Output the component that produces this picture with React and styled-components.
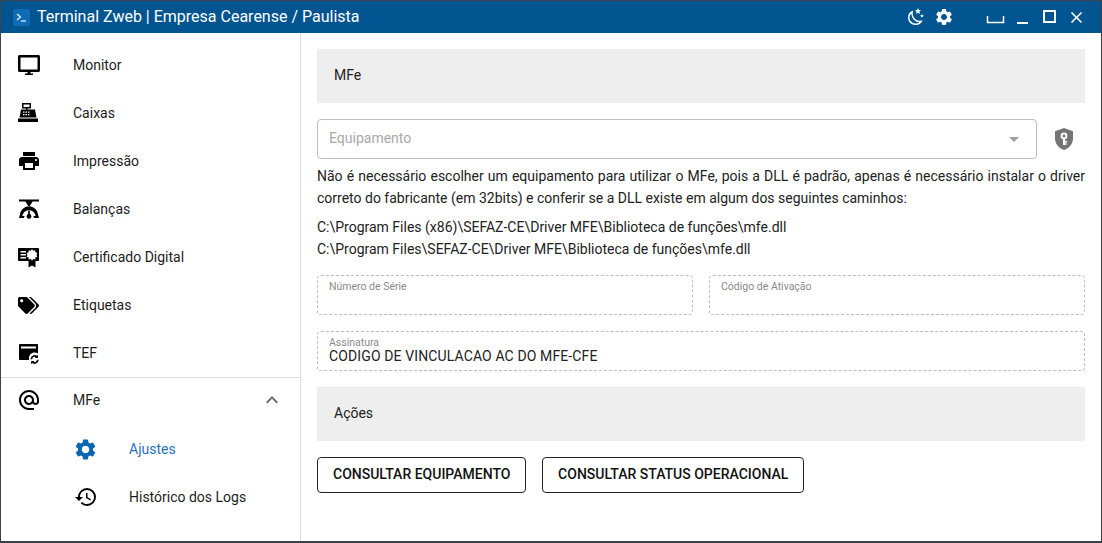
import React from "react";
import styled, { createGlobalStyle } from "styled-components";
import { FaTags } from "react-icons/fa";
import {
  MdPrint,
  MdAlternateEmail,
  MdSettings,
  MdHistory,
  MdExpandLess,
  MdClose,
  MdArrowDropDown,
} from "react-icons/md";

const GlobalStyle = createGlobalStyle`
  html, body {
    margin: 0;
    padding: 0;
    background: #fff;
  }
  * {
    box-sizing: border-box;
  }
`;

const Window = styled.div`
  width: 1102px;
  height: 543px;
  display: flex;
  flex-direction: column;
  border: 1px solid #3c4348;
  border-bottom-width: 2px;
  font-family: Roboto, "Liberation Sans", sans-serif;
  color: #1a1a1a;
  overflow: hidden;
`;

const TitleBar = styled.header`
  height: 32px;
  flex: none;
  display: flex;
  align-items: center;
  background: #005490;
  color: #fff;
  padding: 0 11px 0 12px;
`;

const AppLogo = styled.div`
  width: 17px;
  height: 17px;
  border-radius: 3px;
  background: #0d6cb5;
  display: flex;
  margin-right: 7px;
`;

const AppTitle = styled.div`
  font-size: 16px;
  line-height: 32px;
  flex: 1;
`;

const TitleActions = styled.div`
  display: flex;
  align-items: center;
`;

const TitleIcon = styled.div`
  width: ${(p) => p.$w || 28}px;
  height: 32px;
  margin-left: ${(p) => p.$ml || 0}px;
  display: flex;
  align-items: center;
  justify-content: center;
`;

const Body = styled.div`
  flex: 1;
  display: flex;
  min-height: 0;
`;

const Sidebar = styled.nav`
  width: 300px;
  flex: none;
  padding-top: 8px;
  border-right: 1px solid #dcdcdc;
`;

const MenuItem = styled.div`
  height: 48px;
  display: flex;
  align-items: center;
  padding-left: ${(p) => (p.$sub ? 72 : 16)}px;
  padding-bottom: ${(p) => (p.$divider ? 3 : 0)}px;
  font-size: 14px;
  color: ${(p) => (p.$active ? "#2a73b8" : "#1d1d1d")};
  border-top: ${(p) => (p.$divider ? "1px solid #dcdcdc" : "none")};
`;

const MenuIcon = styled.span`
  width: 56px;
  flex: none;
  display: flex;
  align-items: center;
  padding-left: ${(p) => p.$nudge || 0}px;
  color: ${(p) => (p.$active ? "#0a66b0" : "#000")};
`;

const MenuLabel = styled.span`
  flex: 1;
`;

const Chevron = styled.span`
  display: flex;
  margin-right: 16px;
  color: #6b6b6b;
`;

const Content = styled.main`
  flex: 1;
  min-width: 0;
  padding: 16px 16px 0;
  display: flex;
  flex-direction: column;
`;

const SectionBar = styled.div`
  height: 54px;
  flex: none;
  margin-top: ${(p) => p.$mt || 0}px;
  background: #eeeeee;
  display: flex;
  align-items: center;
  padding: 0 0 2px 17px;
  font-size: 14px;
  color: #222;
`;

const SelectRow = styled.div`
  display: flex;
  align-items: center;
  margin-top: 16px;
  height: 40px;
`;

const SelectBox = styled.div`
  width: 720px;
  height: 40px;
  border: 1px solid #bdbdbd;
  border-radius: 4px;
  display: flex;
  align-items: center;
  justify-content: space-between;
  padding: 0 10px 0 11px;
  font-size: 14px;
  color: #a8a8a8;
`;

const Placeholder = styled.span`
  padding-bottom: 2px;
`;

const ShieldButton = styled.div`
  width: 48px;
  display: flex;
  justify-content: center;
  padding-left: 6px;
`;

const HelpText = styled.p`
  margin: 6px 0 0;
  font-size: 14px;
  line-height: 22px;
  text-align: justify;
  color: #222;
`;

const PathList = styled.div`
  margin-top: 7px;
  font-size: 14px;
  line-height: 22px;
  color: #222;
`;

const FieldRow = styled.div`
  display: flex;
  gap: 16px;
  margin-top: ${(p) => p.$mt || 16}px;
`;

const Field = styled.div`
  flex: 1;
  height: 40px;
  border: 1px dashed #bdbdbd;
  border-radius: 4px;
  padding: 5px 11px 0;
`;

const FieldLabel = styled.div`
  font-size: 10.5px;
  line-height: 12px;
  color: #8a8a8a;
`;

const FieldValue = styled.div`
  font-size: 14px;
  line-height: 14px;
  letter-spacing: 0.12px;
  color: #222;
`;

const ActionsRow = styled.div`
  display: flex;
  gap: 16px;
  margin-top: 16px;
`;

const OutlineButton = styled.button`
  height: 36px;
  padding: 0 14.7px 2px 15px;
  background: #fff;
  border: 1px solid #222;
  border-radius: 4px;
  font-family: inherit;
  font-size: 14px;
  font-weight: 500;
  color: #111;
`;

const MonitorIcon = () => (
  <svg width="24" height="22" viewBox="0 0 24 22" fill="#000">
    <path
      fillRule="evenodd"
      d="M2.500 1h19c.8 0 1.500.7 1.500 1.500v14c0 .8-.7 1.500-1.500 1.500h-19c-.8 0-1.500-.7-1.500-1.500v-14C1 1.700 1.700 1 2.500 1zM3.500 3.500v12h17v-12z"
    />
    <path d="M10.500 18h3v1.500h2.500V21H8v-1.500h2.500z" />
  </svg>
);

const RegisterIcon = () => (
  <svg width="22" height="22" viewBox="0 0 22 22" fill="#000">
    <path fillRule="evenodd" d="M5 1h9v5.500H5zM6.500 2.500V5h6V2.500z" />
    <path d="M9 6h1.500v2H9z" />
    <path
      fillRule="evenodd"
      d="M4 7.500h14l1.500 8h-17zM6 9.500v1.300h1.500V9.500zm2.500 0v1.300H10V9.500zm2.500 0v1.300h1.500V9.500zM6 12v1.300h1.500V12zm2.500 0v1.300H10V12zm2.500 0v1.300h1.500V12z"
    />
    <path d="M1 16.500h20V20H1z" />
  </svg>
);

const BalanceIcon = () => (
  <svg width="22" height="22" viewBox="0 0 22 22" fill="#000">
    <path d="M1 1.500h20v2h-6.400L11.800 8h-1.600L7.400 3.500H1z" />
    <path d="M11 8.300c4.700 0 8.500 3.600 9 8.200l1 3.500h-4.800l-.9-2h2.300c-.5-3.300-3.200-5.700-6.600-5.700S4.900 14.700 4.400 18h2.300l-.9 2H1l1-3.500c.5-4.600 4.300-8.200 9-8.200z" />
    <circle cx="11" cy="18.400" r="2.400" />
    <path d="M10.300 12.500h1.400l.3 5h-2z" />
  </svg>
);

const CertificateIcon = () => (
  <svg width="22" height="22" viewBox="0 0 22 22">
    <path fill="#000" d="M1 2h19c.6 0 1 .4 1 1v11c0 .6-.4 1-1 1H1c-.6 0-1-.4-1-1V3c0-.6.4-1 1-1z" />
    <path fill="#fff" d="M2.500 5H8v1.500H2.500zM2.500 8H8v1.500H2.500zM2.500 11H8v1.500H2.500z" />
    <path fill="#000" d="M10.500 12h7v9.500l-3.500-2-3.500 2z" />
    <path
      fill="#fff"
      d="M14 3l1.200 1.700 2-.5.300 2 1.900.8-.9 1.900.9 1.900-1.900.8-.3 2-2-.5L14 14.800l-1.200-1.700-2 .5-.3-2-1.900-.8.9-1.900-.9-1.900 1.900-.8.300-2 2 .5z"
    />
  </svg>
);

const CardSyncIcon = () => (
  <svg width="22" height="22" viewBox="0 0 22 22">
    <path
      fill="#000"
      d="M2 2h17c.6 0 1 .4 1 1v8.500c-1-.6-2.200-.9-3.500-.9-2.900 0-5.300 2.300-5.500 5.400v2H2c-.6 0-1-.4-1-1V3c0-.6.4-1 1-1zm1 2.500V6.500h15V4.500z"
      fillRule="evenodd"
    />
    <path
      d="M13.400 17.200a3.200 3.200 0 0 1 5.400-2.300M19.800 17.800a3.200 3.200 0 0 1-5.400 2.300"
      fill="none"
      stroke="#000"
      strokeWidth="1.700"
    />
    <path d="M20 12.800v3.300h-3.300zM13.200 22.200v-3.300h3.300z" fill="#000" />
  </svg>
);

const MoonStarsIcon = () => (
  <svg width="18" height="18" viewBox="0 0 18 18" fill="#fff">
    <path
      fillRule="evenodd"
      d="M6.500 2.500A7.500 7.500 0 0 0 1 9.700 7.400 7.400 0 0 0 8.500 17a7.500 7.500 0 0 0 7.200-4.800c-.8.300-1.700.5-2.600.5-4.300 0-7.400-3.300-7.400-7.300 0-1.100.3-2.100.8-2.900zM4.500 5.400c-.1 4.500 3.200 8.300 7.900 8.900-1.100.9-2.400 1.200-3.900 1.200a5.900 5.900 0 0 1-6-5.800c0-1.600.7-3.200 2-4.300z"
    />
    <path d="M11 0l.9 2.100 2.200.2-1.700 1.400.6 2.200-2-1.200-1.900 1.200.5-2.200-1.600-1.400 2.200-.2zM15 6l.5 1.200 1.300.1-1 .9.300 1.300-1.100-.7-1.200.7.300-1.300-1-.9 1.300-.1z" />
  </svg>
);

const ShieldKeyIcon = () => (
  <svg width="20" height="22" viewBox="0 0 20 22">
    <path fill="#757575" d="M10 0l9 3.300v7.200c0 5.100-3.800 9.800-9 11.500-5.200-1.700-9-6.400-9-11.500V3.300z" />
    <circle cx="10" cy="8" r="2.400" fill="none" stroke="#fff" strokeWidth="2" />
    <path d="M9 10h2v7H9zM11 13h2.200v1.500H11zM11 15.300h1.600v1.500H11z" fill="#fff" />
  </svg>
);

const menu = [
  { label: "Monitor", icon: <MonitorIcon /> },
  { label: "Caixas", icon: <RegisterIcon /> },
  { label: "Impressão", icon: <MdPrint size={24} /> },
  { label: "Balanças", icon: <BalanceIcon />, nudge: 1 },
  { label: "Certificado Digital", icon: <CertificateIcon />, nudge: 1 },
  { label: "Etiquetas", icon: <FaTags size={21} />, nudge: 1 },
  { label: "TEF", icon: <CardSyncIcon />, nudge: 1 },
];

export default function App() {
  return (
    <Window>
      <GlobalStyle />
      <TitleBar>
        <AppLogo>
          <svg width="17" height="17" viewBox="0 0 17 17" fill="none" stroke="#fff" strokeWidth="1.100">
            <path d="M4 5l3.500 3L4 11" />
            <path d="M8 12h5" />
          </svg>
        </AppLogo>
        <AppTitle>Terminal Zweb | Empresa Cearense / Paulista</AppTitle>
        <TitleActions>
          <TitleIcon>
            <MoonStarsIcon />
          </TitleIcon>
          <TitleIcon>
            <MdSettings size={20} />
          </TitleIcon>
          <TitleIcon $w={27} $ml={24}>
            <svg width="27" height="32" viewBox="0 0 27 32" fill="none" stroke="#fff" strokeWidth="1.500">
              <path d="M5.500 15v6.500h16V15" />
            </svg>
          </TitleIcon>
          <TitleIcon $w={27}>
            <svg width="27" height="32" viewBox="0 0 27 32" fill="#fff">
              <rect x="8" y="21" width="11" height="2" />
            </svg>
          </TitleIcon>
          <TitleIcon $w={27}>
            <svg width="27" height="32" viewBox="0 0 27 32" fill="none" stroke="#fff" strokeWidth="2">
              <rect x="8" y="10" width="11" height="11" />
            </svg>
          </TitleIcon>
          <TitleIcon $w={27}>
            <MdClose size={19} />
          </TitleIcon>
        </TitleActions>
      </TitleBar>
      <Body>
        <Sidebar>
          {menu.map((item) => (
            <MenuItem key={item.label}>
              <MenuIcon $nudge={item.nudge}>{item.icon}</MenuIcon>
              <MenuLabel>{item.label}</MenuLabel>
            </MenuItem>
          ))}
          <MenuItem $divider>
            <MenuIcon>
              <MdAlternateEmail size={24} />
            </MenuIcon>
            <MenuLabel>MFe</MenuLabel>
            <Chevron>
              <MdExpandLess size={24} />
            </Chevron>
          </MenuItem>
          <MenuItem $sub $active>
            <MenuIcon $active>
              <MdSettings size={25} />
            </MenuIcon>
            <MenuLabel>Ajustes</MenuLabel>
          </MenuItem>
          <MenuItem $sub>
            <MenuIcon $nudge={1}>
              <MdHistory size={24} />
            </MenuIcon>
            <MenuLabel>Histórico dos Logs</MenuLabel>
          </MenuItem>
        </Sidebar>
        <Content>
          <SectionBar>MFe</SectionBar>
          <SelectRow>
            <SelectBox>
              <Placeholder>Equipamento</Placeholder>
              <MdArrowDropDown size={24} color="#9e9e9e" />
            </SelectBox>
            <ShieldButton>
              <ShieldKeyIcon />
            </ShieldButton>
          </SelectRow>
          <HelpText>
            Não é necessário escolher um equipamento para utilizar o MFe, pois a DLL é padrão, apenas é necessário
            instalar o driver correto do fabricante (em 32bits) e conferir se a DLL existe em algum dos seguintes
            caminhos:
          </HelpText>
          <PathList>
            <div>C:\Program Files (x86)\SEFAZ-CE\Driver MFE\Biblioteca de funções\mfe.dll</div>
            <div>C:\Program Files\SEFAZ-CE\Driver MFE\Biblioteca de funções\mfe.dll</div>
          </PathList>
          <FieldRow $mt={15}>
            <Field>
              <FieldLabel>Número de Série</FieldLabel>
            </Field>
            <Field>
              <FieldLabel>Código de Ativação</FieldLabel>
            </Field>
          </FieldRow>
          <FieldRow>
            <Field>
              <FieldLabel>Assinatura</FieldLabel>
              <FieldValue>CODIGO DE VINCULACAO AC DO MFE-CFE</FieldValue>
            </Field>
          </FieldRow>
          <SectionBar $mt={16}>Ações</SectionBar>
          <ActionsRow>
            <OutlineButton>CONSULTAR EQUIPAMENTO</OutlineButton>
            <OutlineButton>CONSULTAR STATUS OPERACIONAL</OutlineButton>
          </ActionsRow>
        </Content>
      </Body>
    </Window>
  );
}
